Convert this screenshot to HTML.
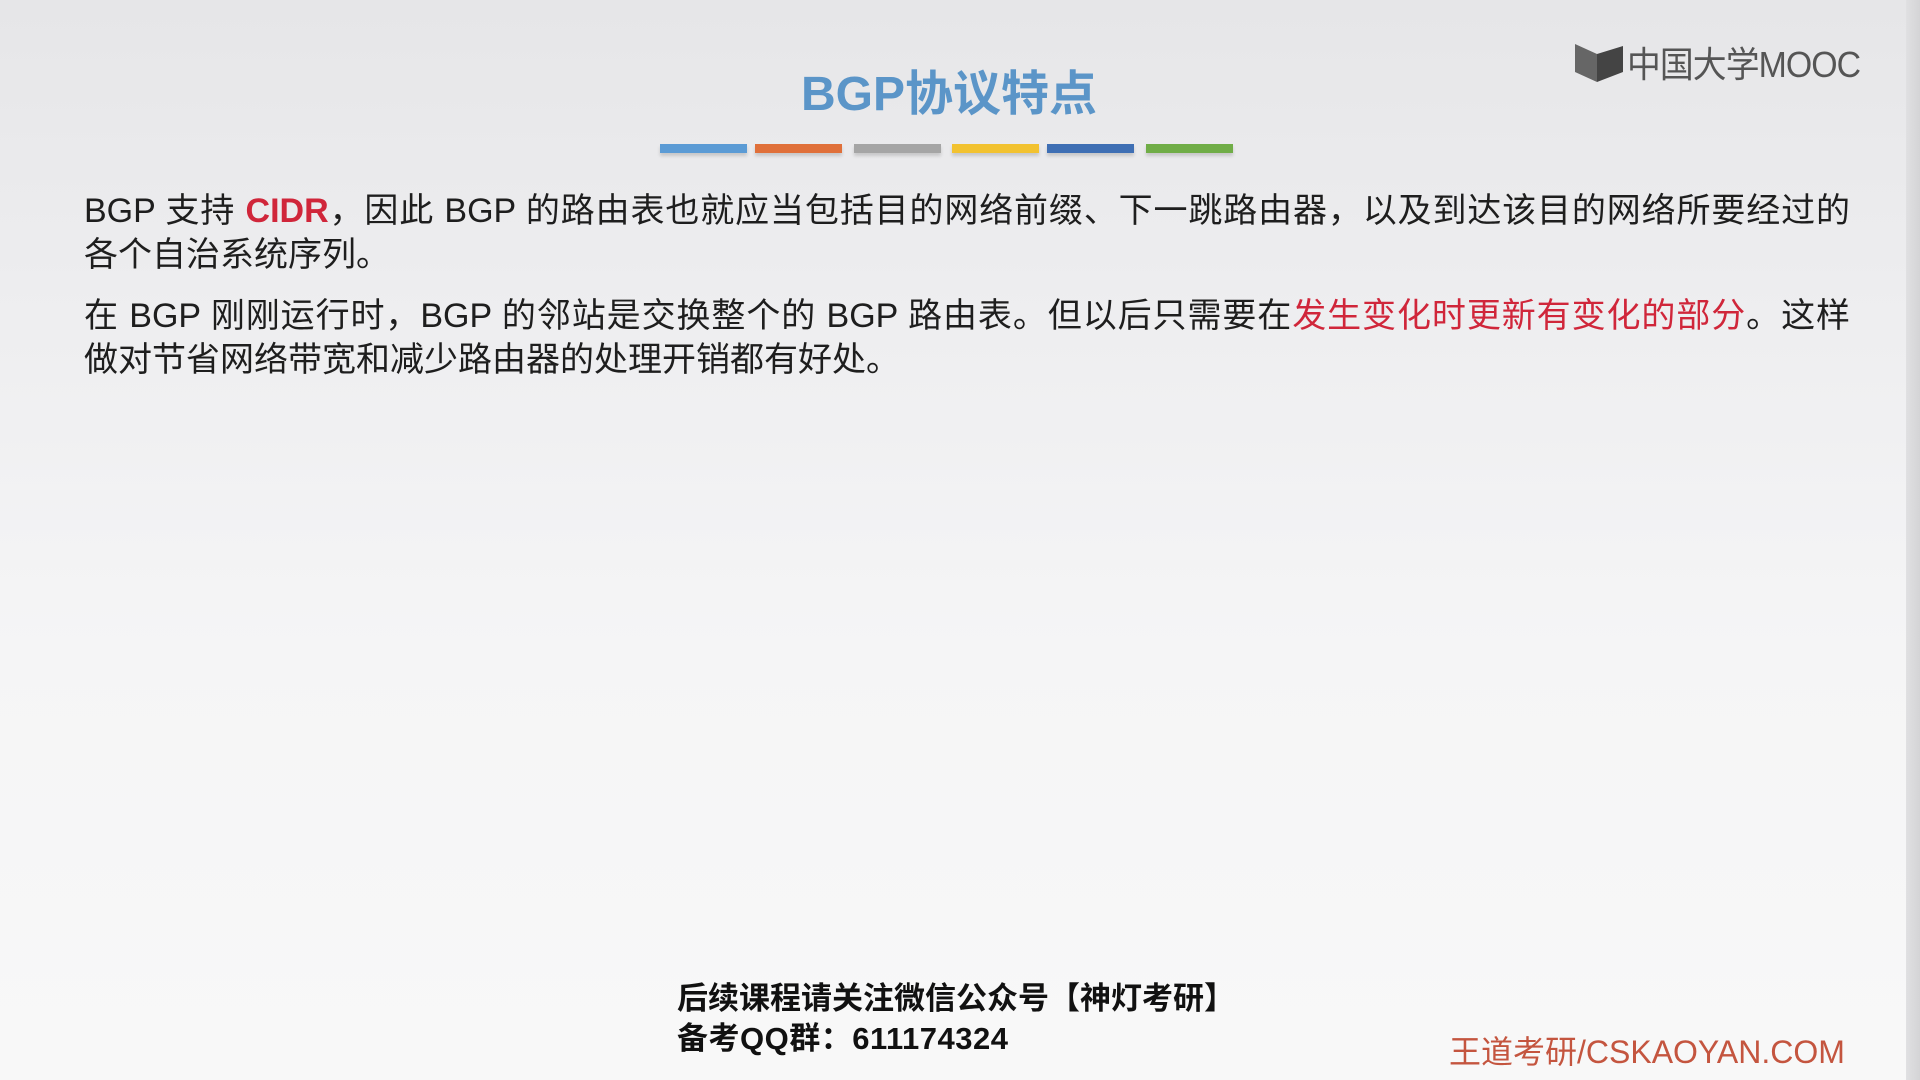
<!DOCTYPE html>
<html><head><meta charset="utf-8"><style>
html,body{margin:0;padding:0}
body{width:1920px;height:1080px;position:relative;overflow:hidden;
background:linear-gradient(180deg,#e6e6e8 0%,#eeeef0 30%,#f5f5f6 60%,#f8f8f8 100%);
font-family:"Liberation Sans","Noto Sans CJK SC",sans-serif;color:#222}
.edge{position:absolute;right:0;top:0;width:14px;height:1080px;background:linear-gradient(90deg,#e0e0e2,#d4d4d6)}
.title{position:absolute;left:0;width:1898px;top:54px;text-align:center;font-size:48px;font-weight:bold;color:#5b95c8}
.bar{position:absolute;top:144px;height:9px;width:87px;box-shadow:0 3px 3px rgba(0,0,0,.15)}
.logo{position:absolute;left:1575px;top:42px;height:42px}
.logo span{position:absolute;left:52px;top:-6px;font-size:36px;color:#555;white-space:nowrap;letter-spacing:-1px;transform:scaleX(.94);transform-origin:left}
.l{position:absolute;left:84px;width:1766px;font-size:34px;line-height:44px;color:#1e1e1e;white-space:nowrap}
.j{text-align:justify;text-align-last:justify}
.r{color:#d0263a}
.foot{position:absolute;left:677px;font-size:31px;font-weight:bold;color:#111;white-space:nowrap}
.wm{position:absolute;left:1449px;top:1027px;font-size:32px;color:#c4553f;white-space:nowrap}
</style></head><body>
<div class="edge"></div>
<div class="title">BGP协议特点</div>
<div class="bar" style="left:660px;background:#5b9bd5"></div>
<div class="bar" style="left:755px;background:#e0703a"></div>
<div class="bar" style="left:854px;background:#a5a5a5"></div>
<div class="bar" style="left:952px;background:#f2c230"></div>
<div class="bar" style="left:1047px;background:#3f6fb4"></div>
<div class="bar" style="left:1146px;background:#70ad47"></div>
<div class="logo">
<svg width="52" height="42" viewBox="0 0 52 42"><path d="M0 2 L22 12 L22 40 L0 30 Z" fill="#666"/><path d="M22 12 L48 4 L48 30 L22 40 Z" fill="#444"/></svg>
<span>中国大学MOOC</span></div>
<div class="l j" style="top:189px">BGP 支持 <b class="r">CIDR</b>，因此 BGP 的路由表也就应当包括目的网络前缀、下一跳路由器，以及到达该目的网络所要经过的</div>
<div class="l" style="top:233px">各个自治系统序列。</div>
<div class="l j" style="top:294px">在 BGP 刚刚运行时，BGP 的邻站是交换整个的 BGP 路由表。但以后只需要在<span class="r">发生变化时更新有变化的部分</span>。这样</div>
<div class="l" style="top:338px">做对节省网络带宽和减少路由器的处理开销都有好处。</div>
<div class="foot" style="top:973px">后续课程请关注微信公众号【神灯考研】</div>
<div class="foot" style="top:1013px;letter-spacing:.5px">备考QQ群：611174324</div>
<div class="wm">王道考研/CSKAOYAN.COM</div>
</body></html>
